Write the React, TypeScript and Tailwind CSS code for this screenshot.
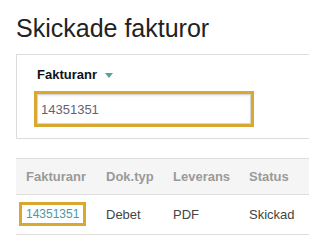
import React from "react";

export default function App() {
  return (
    <div className="w-[309px] h-[244px] bg-white overflow-hidden pl-4 font-['Liberation_Sans',Arial,sans-serif]">
      <h1 className="mt-[13px] text-[25px] leading-[30px] text-[#222] font-normal whitespace-nowrap">
        Skickade fakturor
      </h1>
      <div className="mt-[11px] w-[330px] border border-[#dcdcdc] pt-[12px] pb-[14px] pl-[20px]">
        <div className="flex items-center gap-[8px] h-[15px]">
          <span className="text-[13px] leading-[15px] font-bold text-[#111]">Fakturanr</span>
          <svg width="8" height="5" viewBox="0 0 8 5" className="mt-[1px]">
            <polygon points="0,0 8,0 4,5" fill="#5f9c9c" />
          </svg>
        </div>
        <div className="mt-[12px] w-[214px] h-[30px] border border-[#d6d6d6] bg-white shadow-[inset_0_1px_2px_rgba(0,0,0,0.08)] outline-[3px] outline-solid outline-[#d8a830] flex items-center pl-[3px]">
          <span className="text-[13px] leading-[15px] text-[#646279]">14351351</span>
        </div>
      </div>
      <div className="mt-[19px] w-[330px]">
        <div className="grid grid-cols-[80px_67px_76px_1fr] bg-[#f5f5f5] border-t border-b border-[#dedede]">
          {["Fakturanr", "Dok.typ", "Leverans", "Status"].map((h) => (
            <div key={h} className="pl-[10px] py-[10px] text-[13px] leading-[15px] font-bold text-[#9a9a9a] whitespace-nowrap">
              {h}
            </div>
          ))}
        </div>
        <div className="grid grid-cols-[80px_67px_76px_1fr] border-b border-[#dedede]">
          <div className="pl-[10px] py-[12px] text-[12px] leading-[15px] whitespace-nowrap">
            <a className="text-[#4a98a8] px-[2px] -mx-[2px] outline-[3px] outline-solid outline-[#d8a830] outline-offset-[2px]">
              14351351
            </a>
          </div>
          {["Debet", "PDF", "Skickad"].map((c) => (
            <div key={c} className="pl-[10px] py-[12px] text-[13px] leading-[15px] text-[#444] whitespace-nowrap">
              {c}
            </div>
          ))}
        </div>
      </div>
    </div>
  );
}
